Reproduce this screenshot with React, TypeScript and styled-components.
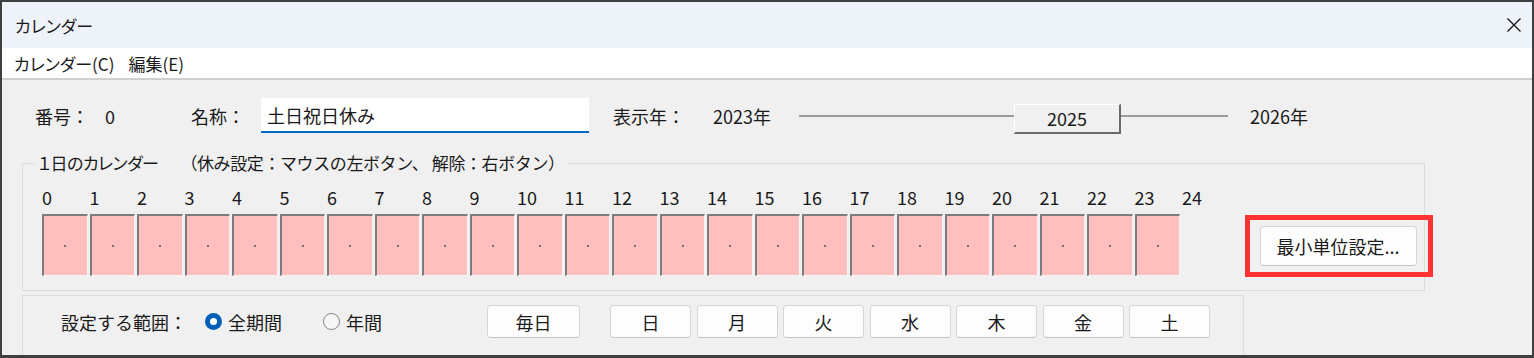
import React from 'react'
import styled, { createGlobalStyle } from 'styled-components'

const GlobalStyle = createGlobalStyle`
    html, body {
        margin: 0;
        padding: 0;
        overflow: hidden;
        background: #f0f0f0;
    }
    body {
        font-family: "Noto Sans CJK JP", "Noto Sans", sans-serif;
        color: #1a1a1a;
    }
`

const Window = styled.div`
    box-sizing: border-box;
    width: 1534px;
    height: 358px;
    border: 2px solid #3f3f3f;
    border-bottom-width: 3px;
    display: flex;
    flex-direction: column;
    overflow: hidden;
    background: #f0f0f0;
`

const TitleBar = styled.div`
    height: 46px;
    flex: none;
    background: #eef2f9;
    display: flex;
    align-items: center;
    justify-content: space-between;
    padding: 0 10px 0 13px;
    font-size: 17px;
    font-feature-settings: "palt";
`

const MenuBar = styled.div`
    height: 30px;
    flex: none;
    background: #ffffff;
    border-bottom: 2px solid #cfcfcf;
    display: flex;
    align-items: center;
    gap: 14px;
    padding-left: 12px;
    font-size: 17px;
    font-feature-settings: "palt";
`

const Content = styled.div`
    flex: 1;
    display: flex;
    flex-direction: column;
    padding: 18px 0 0 20px;
    font-size: 18px;
`

const TopRow = styled.div`
    display: flex;
    align-items: center;
    height: 35px;
    padding-left: 13px;
`

const Text = styled.span<{ $ml?: number }>`
    margin-left: ${p => p.$ml ?? 0}px;
    white-space: nowrap;
`

const NameInput = styled.div`
    box-sizing: border-box;
    width: 328px;
    height: 35px;
    margin-left: 16px;
    background: #ffffff;
    border-bottom: 2px solid #0067c0;
    display: flex;
    align-items: center;
    padding-left: 6px;
`

const Slider = styled.div`
    display: flex;
    align-items: center;
    width: 429px;
    margin-left: 28px;
`

const Track = styled.div<{ $w: number }>`
    width: ${p => p.$w}px;
    height: 2px;
    background: #9a9a9a;
`

const Thumb = styled.div`
    box-sizing: border-box;
    width: 107px;
    height: 30px;
    margin-top: 6px;
    background: #f0f0f0;
    border-top: 1px solid #ffffff;
    border-left: 1px solid #ffffff;
    border-right: 2px solid #6a6a6a;
    border-bottom: 2px solid #6a6a6a;
    display: flex;
    align-items: center;
    justify-content: center;
    font-size: 18px;
`

const Group = styled.fieldset<{ $w: number }>`
    box-sizing: border-box;
    width: ${p => p.$w}px;
    margin: 0;
    border: 1px solid #dcdcdc;
    min-width: 0;
`

const DayGroup = styled(Group)`
    margin-top: 18px;
    padding: 0 7px 14px 19px;
    display: flex;
    align-items: flex-end;
`

const Legend = styled.legend`
    margin-left: -7px;
    padding: 0 3px;
    line-height: 24px;
    font-size: 17px;
    letter-spacing: -0.4px;
    white-space: nowrap;
`

const Narrow = styled.span`
    font-feature-settings: "palt";
    letter-spacing: -0.5px;
    margin-right: 22px;
`

const Timeline = styled.div`
    display: flex;
    flex-direction: column;
`

const Hours = styled.div`
    display: flex;
    margin-top: 11px;
    height: 22px;
    line-height: 22px;
`

const Hour = styled.span`
    width: 47.5px;
    flex: none;
    font-size: 18px;
`

const Cells = styled.div`
    display: grid;
    grid-template-columns: repeat(24, 45.5px);
    column-gap: 2px;
    margin-top: 6px;
`

const Cell = styled.div<{ $off: boolean }>`
    box-sizing: border-box;
    height: 62px;
    background: ${p => (p.$off ? '#ffbfbf' : '#ffffff')};
    border-top: 2px solid #7c7c7c;
    border-left: 2px solid #7c7c7c;
    border-right: 1px solid #f4f4f4;
    border-bottom: 1px solid #f4f4f4;
    display: flex;
    align-items: center;
    justify-content: center;

    &::after {
        content: '';
        width: 2px;
        height: 2px;
        background: #707070;
    }
`

const Highlight = styled.div`
    position: relative;
    margin: 0 0 10px 30px;

    &::before {
        content: '';
        position: absolute;
        left: -15px;
        right: -16px;
        top: -11px;
        bottom: -11px;
        border: 5px solid #ff3333;
        pointer-events: none;
    }
`

const Button = styled.button<{ $w: number; $h: number; $ml?: number }>`
    box-sizing: border-box;
    width: ${p => p.$w}px;
    height: ${p => p.$h}px;
    margin: 0 0 0 ${p => p.$ml ?? 0}px;
    padding: 0;
    background: #fdfdfd;
    border: 1px solid #d6d6d6;
    border-bottom-color: #c4c4c4;
    border-radius: 4px;
    font-family: inherit;
    font-size: 18px;
    color: #1a1a1a;
    display: flex;
    align-items: center;
    justify-content: center;
    flex: none;
`

const RangeGroup = styled(Group)`
    margin-top: 4px;
    height: 80px;
    padding: 9px 0 0 38px;
    display: flex;
    align-items: flex-start;
`

const RangeRow = styled.div`
    display: flex;
    align-items: center;
    height: 33px;
`

const Radio = styled.span<{ $checked: boolean; $ml: number }>`
    box-sizing: border-box;
    width: 17px;
    height: 17px;
    border-radius: 50%;
    margin-left: ${p => p.$ml}px;
    margin-right: 6px;
    flex: none;
    display: flex;
    align-items: center;
    justify-content: center;
    background: ${p => (p.$checked ? '#005fb8' : '#f6f6f6')};
    border: ${p => (p.$checked ? 'none' : '1.5px solid #808080')};

    &::after {
        content: '';
        display: ${p => (p.$checked ? 'block' : 'none')};
        width: 7px;
        height: 7px;
        border-radius: 50%;
        background: #ffffff;
    }
`

const Weekdays = styled.div`
    display: flex;
    gap: 5.5px;
    margin-left: 30px;
`

const hours = Array.from({ length: 25 }, (_, i) => i)
const weekdays = ['日', '月', '火', '水', '木', '金', '土']

const App: React.FC = () => {
    return (
        <>
            <GlobalStyle />
            <Window>
                <TitleBar>
                    <span>カレンダー</span>
                    <svg width="16" height="16" viewBox="0 0 16 16">
                        <path d="M1.5 1.5 L14.5 14.5 M14.5 1.5 L1.5 14.5" stroke="#1a1a1a" strokeWidth="1.4" fill="none" />
                    </svg>
                </TitleBar>
                <MenuBar>
                    <span>カレンダー(C)</span>
                    <span>編集(E)</span>
                </MenuBar>
                <Content>
                    <TopRow>
                        <Text>番号：</Text>
                        <Text $ml={16}>0</Text>
                        <Text $ml={76}>名称：</Text>
                        <NameInput>土日祝日休み</NameInput>
                        <Text $ml={24}>表示年：</Text>
                        <Text $ml={28}>2023年</Text>
                        <Slider>
                            <Track $w={215} />
                            <Thumb>2025</Thumb>
                            <Track $w={107} />
                        </Slider>
                        <Text $ml={22}>2026年</Text>
                    </TopRow>
                    <DayGroup $w={1403}>
                        <Legend>
                            <Narrow>１日のカレンダー</Narrow>（休み設定：マウスの左ボタン、 解除：右ボタン）
                        </Legend>
                        <Timeline>
                            <Hours>
                                {hours.map(h => <Hour key={`hour_${h}`}>{h}</Hour>)}
                            </Hours>
                            <Cells>
                                {hours.slice(0, 24).map(h => <Cell key={`cell_${h}`} $off />)}
                            </Cells>
                        </Timeline>
                        <Highlight>
                            <Button $w={157} $h={40}>最小単位設定...</Button>
                        </Highlight>
                    </DayGroup>
                    <RangeGroup $w={1222}>
                        <RangeRow>
                            <Text>設定する範囲：</Text>
                            <Radio $checked $ml={18} />
                            <Text>全期間</Text>
                            <Radio $checked={false} $ml={41} />
                            <Text>年間</Text>
                            <Button $w={93} $h={33} $ml={105}>毎日</Button>
                            <Weekdays>
                                {weekdays.map(d => <Button key={d} $w={81} $h={33}>{d}</Button>)}
                            </Weekdays>
                        </RangeRow>
                    </RangeGroup>
                </Content>
            </Window>
        </>
    )
}

export default App
